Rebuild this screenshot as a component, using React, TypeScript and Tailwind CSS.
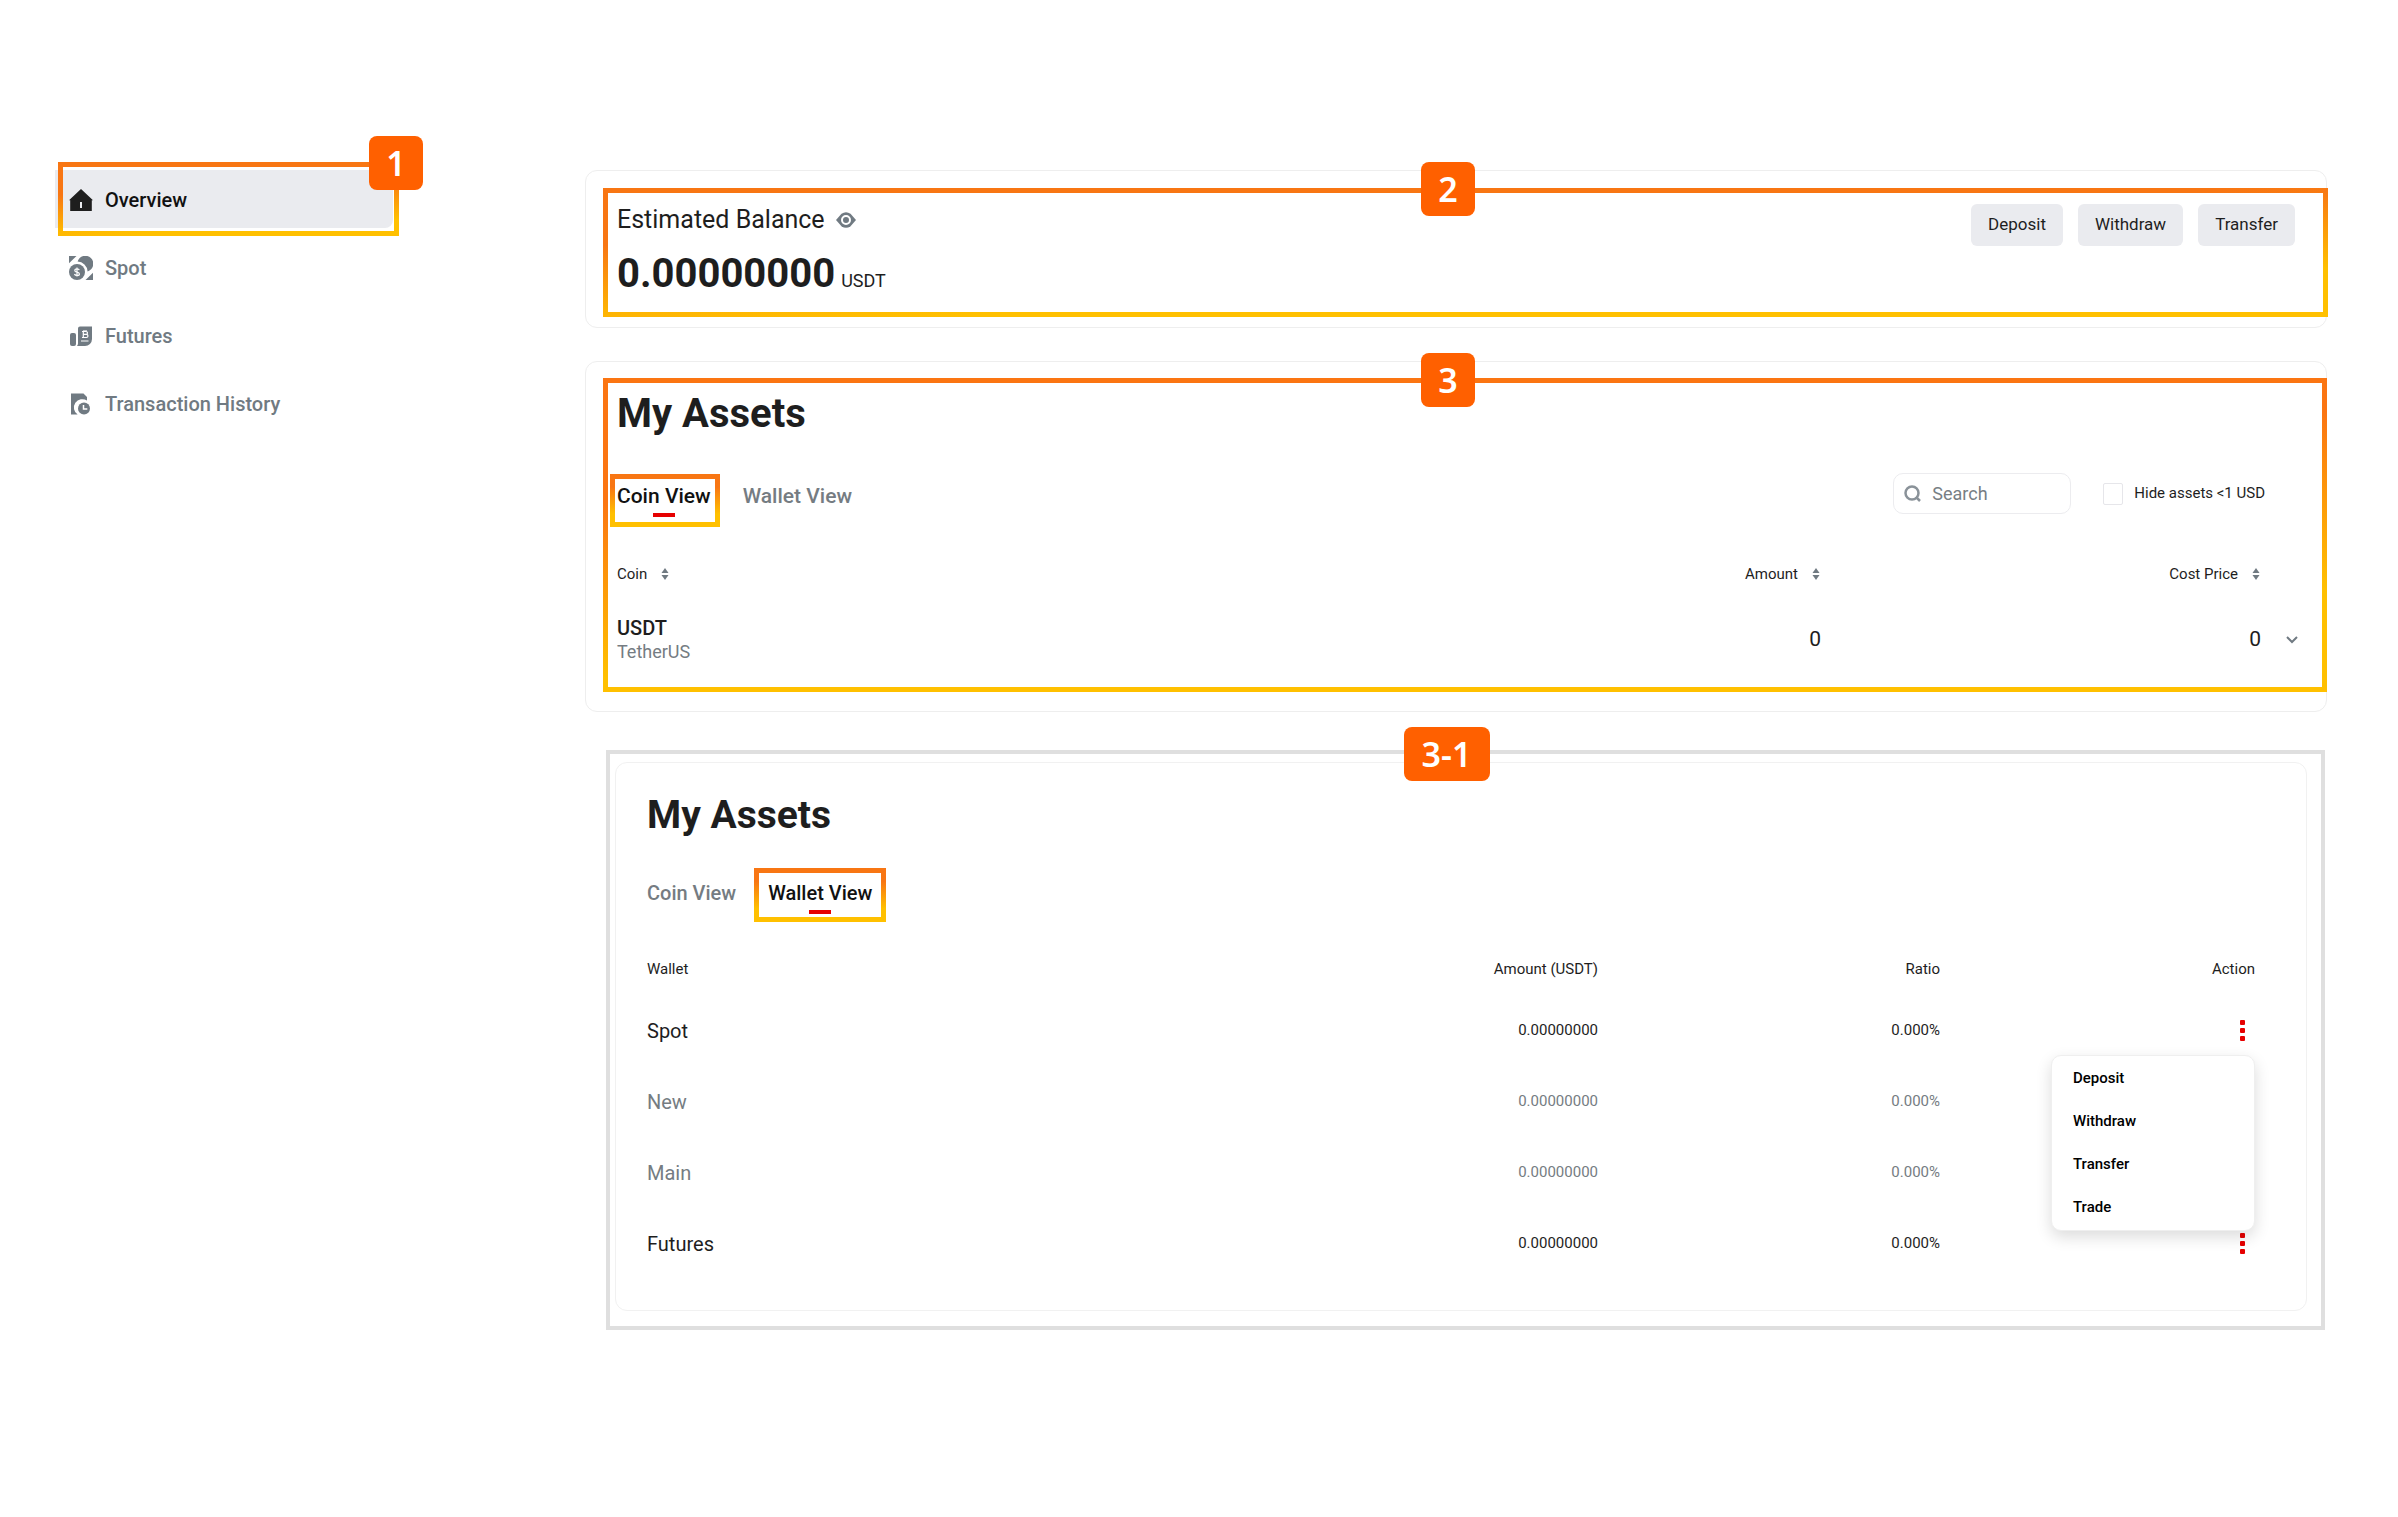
import type { ReactNode } from "react";

const navItems = [
    { label: "Overview", icon: <HomeIcon />, active: true },
    { label: "Spot", icon: <SpotIcon />, active: false },
    { label: "Futures", icon: <FuturesIcon />, active: false },
    { label: "Transaction History", icon: <HistoryIcon />, active: false },
];

const wallets = [
    { name: "Spot", amount: "0.00000000", ratio: "0.000%", muted: false, menuOpen: true },
    { name: "New", amount: "0.00000000", ratio: "0.000%", muted: true, menuOpen: false },
    { name: "Main", amount: "0.00000000", ratio: "0.000%", muted: true, menuOpen: false },
    { name: "Futures", amount: "0.00000000", ratio: "0.000%", muted: false, menuOpen: false },
];

function HomeIcon() {
    return (
        <svg width="24" height="24" viewBox="0 0 24 24" fill="#1e1e1e" aria-hidden="true">
            <path d="M12 1 24 12.2h-1.2V23H1.2V12.2H0Z" />
            <path d="M11 14h2v6h-2z" fill="#eaebef" />
        </svg>
    );
}

function SpotIcon() {
    return (
        <svg width="24" height="24" viewBox="0 0 24 24" fill="#707a82" aria-hidden="true">
            <path d="M0 0h7.5L0 7.2Z" />
            <path d="M24 24h-7.5L24 16.8Z" />
            <path d="M8.6 5.6A8 8 0 1 1 18.6 15.4 10.6 10.6 0 0 0 8.6 5.6Z" />
            <circle cx="8" cy="16" r="8" />
            <path
                d="M10.3 14.2c-.3-1-1.2-1.4-2.3-1.4-1.3 0-2.2.6-2.2 1.6 0 2.3 4.6 1.2 4.6 3.5 0 1-1 1.6-2.4 1.6-1.3 0-2.2-.5-2.5-1.5M8 11.5v9"
                fill="none"
                stroke="#fff"
                strokeWidth="1.2"
            />
        </svg>
    );
}

function FuturesIcon() {
    return (
        <svg width="24" height="24" viewBox="0 0 24 24" fill="#707a82" aria-hidden="true">
            <rect x="1" y="9" width="6" height="13" rx="2" />
            <path d="M9 4.5a2 2 0 0 1 2-2h12V15a7 7 0 0 1-7 7H8a3.6 3.6 0 0 0 1-2.5Z" />
            <path
                d="M13 7.5h4a1.4 1.4 0 0 1 0 2.9h-3M14 10.4h3.4a1.5 1.5 0 0 1 0 3.1H13M14.3 7v6.5M15 6v1.5M17 6v1.5M12 17h7.5"
                fill="none"
                stroke="#fff"
                strokeWidth="1.2"
            />
        </svg>
    );
}

function HistoryIcon() {
    return (
        <svg width="24" height="24" viewBox="0 0 24 24" fill="#707a82" aria-hidden="true">
            <path d="M2 1.5h12.5L18 5v3.6A7.6 7.6 0 0 0 8.6 22.5H2Z" />
            <circle cx="15" cy="16.5" r="6" />
            <path d="M14.5 13v4h3.8" fill="none" stroke="#fff" strokeWidth="1.5" />
        </svg>
    );
}

function EyeIcon() {
    return (
        <svg width="20" height="16" viewBox="0 0 20 16" aria-hidden="true">
            <path d="M0 8 5.5 1.8Q10-1.2 14.5 1.8L20 8l-5.5 6.2q-4.5 3-9 0Z" fill="#707a82" />
            <circle cx="10" cy="8" r="4" fill="none" stroke="#fff" strokeWidth="2" />
        </svg>
    );
}

function SortIcon() {
    return (
        <svg width="8" height="12" viewBox="0 0 8 12" fill="#707a82" aria-hidden="true">
            <path d="M4 0 7.5 5h-7Z" />
            <path d="M4 12 .5 7h7Z" />
        </svg>
    );
}

function Frame({ className }: { className: string }) {
    return (
        <div
            aria-hidden="true"
            className={`pointer-events-none absolute border-[5px] ${className}`}
        />
    );
}

function Badge({ className, children }: { className: string; children: ReactNode }) {
    return (
        <span
            className={`absolute z-10 flex h-[54px] items-center justify-center rounded-lg bg-[#ff6000] font-['Noto_Sans',sans-serif] text-[34px] leading-none font-semibold text-white ${className}`}
        >
            {children}
        </span>
    );
}

interface TabProps {
    label: string;
    active?: boolean;
    className: string;
    frame?: string;
}

function Tab({ label, active, className, frame }: TabProps) {
    return (
        <button
            type="button"
            role="tab"
            aria-selected={!!active}
            className={`relative flex flex-col items-center font-medium leading-8 ${active ? "text-[#111111]" : "text-[#757c82]"} ${className}`}
        >
            {label}
            {active && <span className="mt-px h-1 w-[22px] bg-[#e60000]" />}
            {frame && <Frame className={frame} />}
        </button>
    );
}

function SortButton({ label }: { label: string }) {
    return (
        <button type="button" className="inline-flex items-center gap-[14px] pr-px">
            {label}
            <SortIcon />
        </button>
    );
}

function Sidebar() {
    return (
        <nav className="w-[338px] shrink-0">
            <ul className="flex flex-col gap-[10px]">
                {navItems.map((item) => (
                    <li key={item.label} className="relative">
                        <a
                            href="#"
                            className={`flex h-[58px] items-center gap-3 rounded-r-lg pt-[2px] pl-[14px] text-[20px] font-medium ${item.active ? "bg-[#eaebef] text-[#111111]" : "text-[#707a82]"}`}
                        >
                            {item.icon}
                            {item.label}
                        </a>
                        {item.active && (
                            <>
                                <Frame className="-top-2 -right-[6px] -bottom-2 left-[3px] [border-image:linear-gradient(177deg,#f87613_35%,#ffc000_85%)_1]" />
                                <Badge className="-top-[34px] -right-[30px] w-[54px]">1</Badge>
                            </>
                        )}
                    </li>
                ))}
            </ul>
        </nav>
    );
}

function BalanceCard() {
    return (
        <section className="relative flex items-start justify-between rounded-xl border border-[#eeeeee] pt-[33px] pr-[31px] pb-[29px] pl-[31px]">
            <div>
                <div className="flex items-center gap-[11px] text-[25px] leading-8">
                    Estimated Balance
                    <button type="button" aria-label="Hide balance">
                        <EyeIcon />
                    </button>
                </div>
                <div className="mt-[14px] flex items-baseline gap-[6px]">
                    <span className="text-[40px] leading-[48px] font-bold">0.00000000</span>
                    <span className="text-[18px] leading-6">USDT</span>
                </div>
            </div>
            <div className="flex gap-[15px]">
                {["Deposit", "Withdraw", "Transfer"].map((label) => (
                    <button key={label} type="button" className="h-[42px] rounded-md bg-[#eaebef] px-[17px] text-[17px]">
                        {label}
                    </button>
                ))}
            </div>
            <Frame className="top-[17px] -right-[2px] bottom-[10px] left-[17px] [border-image:linear-gradient(178deg,#f87613_30%,#ffc000_75%)_1]" />
            <Badge className="-top-[9px] left-1/2 -ml-[35px] w-[54px]">2</Badge>
        </section>
    );
}

function CoinAssets() {
    return (
        <section className="relative mt-[33px] rounded-xl border border-[#eeeeee] pt-7 pr-7 pb-[31px] pl-[31px]">
            <h2 className="text-[40px] leading-[48px] font-bold">My Assets</h2>
            <div className="mt-[35px] flex items-start justify-between">
                <div role="tablist" className="flex items-start gap-8 pt-[7px]">
                    <Tab
                        label="Coin View"
                        active
                        className="text-[21px]"
                        frame="-top-[6px] -right-[9px] -bottom-[10px] -left-[7px] [border-image:linear-gradient(#f87613_20%,#ffc000_80%)_1]"
                    />
                    <Tab label="Wallet View" className="text-[21px]" />
                </div>
                <div className="mr-[33px] flex items-center gap-8">
                    <label className="flex h-[41px] w-[178px] items-center gap-[11px] rounded-[10px] border border-[#ececef] pl-[10px]">
                        <svg width="17" height="17" viewBox="0 0 17 17" fill="none" stroke="#8a9299" strokeWidth="2.5" className="shrink-0" aria-hidden="true">
                            <circle cx="8" cy="8" r="6.5" />
                            <path d="m12 12 4 4" />
                        </svg>
                        <input
                            type="text"
                            aria-label="Search"
                            placeholder="Search"
                            className="w-full min-w-0 bg-transparent text-[18px] outline-none placeholder:text-[#777e84]"
                        />
                    </label>
                    <label className="flex items-center gap-[11px] text-[15px]">
                        <input type="checkbox" className="h-[22px] w-5 appearance-none rounded-xs border border-[#e6e6ea]" />
                        Hide assets &lt;1 USD
                    </label>
                </div>
            </div>
            <table className="mt-[31px] w-full table-fixed">
                <thead>
                    <tr className="h-[52px] text-[15px]">
                        <th className="text-left font-normal"><SortButton label="Coin" /></th>
                        <th className="w-[440px] text-right font-normal"><SortButton label="Amount" /></th>
                        <th className="w-[440px] text-right font-normal"><SortButton label="Cost Price" /></th>
                        <th className="w-[37px]" />
                    </tr>
                </thead>
                <tbody>
                    <tr className="h-20">
                        <td className="leading-6">
                            <div className="text-[20px] font-medium">USDT</div>
                            <div className="text-[18px] text-[#757c82]">TetherUS</div>
                        </td>
                        <td className="text-right text-[21px]">0</td>
                        <td className="text-right text-[21px]">0</td>
                        <td>
                            <button type="button" aria-label="Show details" className="ml-auto block">
                                <svg width="12" height="8" viewBox="0 0 12 8" fill="none" stroke="#707a82" strokeWidth="2" aria-hidden="true">
                                    <path d="m1 1 5 5 5-5" />
                                </svg>
                            </button>
                        </td>
                    </tr>
                </tbody>
            </table>
            <Frame className="top-4 -right-px bottom-[19px] left-[17px] [border-image:linear-gradient(177deg,#fb7512_30%,#ffc000_75%)_1]" />
            <Badge className="-top-[9px] left-1/2 -ml-[35px] w-[54px]">3</Badge>
        </section>
    );
}

function ActionMenu() {
    return (
        <div
            role="menu"
            className="absolute top-[60px] right-0 z-10 w-[204px] rounded-[10px] border border-[#efefef] bg-white py-px shadow-[0_6px_16px_rgba(0,0,0,0.14)]"
        >
            {["Deposit", "Withdraw", "Transfer", "Trade"].map((label) => (
                <button key={label} type="button" role="menuitem" className="block h-[43px] w-full pl-[21px] text-left text-[15px] font-medium text-black">
                    {label}
                </button>
            ))}
        </div>
    );
}

function WalletAssets() {
    return (
        <section className="relative mt-[38px] mr-[2px] ml-[21px] border-4 border-[#dfdfdf] pt-2 pr-[14px] pb-[15px] pl-[5px]">
            <div className="rounded-xl border border-[#f1f1f1] pt-7 pr-[51px] pb-[31px] pl-[31px]">
                <h2 className="text-[39px] leading-[48px] font-bold">My Assets</h2>
                <div role="tablist" className="mt-[38px] flex items-start gap-8">
                    <Tab label="Coin View" className="text-[20px]" />
                    <Tab
                        label="Wallet View"
                        active
                        className="text-[20px]"
                        frame="-top-[9px] -right-[14px] -bottom-2 -left-[14px] [border-image:linear-gradient(#f87613_20%,#ffc000_80%)_1]"
                    />
                </div>
                <table className="mt-[30px] w-full table-fixed">
                    <thead>
                        <tr className="h-[51px] text-[15px]">
                            <th className="text-left font-normal">Wallet</th>
                            <th className="w-[342px] text-right font-normal">Amount (USDT)</th>
                            <th className="w-[342px] text-right font-normal">Ratio</th>
                            <th className="w-[315px] text-right font-normal">Action</th>
                        </tr>
                    </thead>
                    <tbody>
                        {wallets.map((w) => (
                            <tr key={w.name} className={`h-[71px] ${w.muted ? "text-[#757c82]" : ""}`}>
                                <td className="text-[20px]">{w.name}</td>
                                <td className="text-right text-[15px]">{w.amount}</td>
                                <td className="text-right text-[15px]">{w.ratio}</td>
                                <td>
                                    {!w.muted && (
                                        <div className="relative flex h-[71px] items-center justify-end pr-[10px]">
                                            <button type="button" aria-label={`${w.name} actions`}>
                                                <svg width="5" height="21" viewBox="0 0 5 21" fill="#e60000" aria-hidden="true">
                                                    <rect width="5" height="5" rx="1" />
                                                    <rect y="8" width="5" height="5" rx="1" />
                                                    <rect y="16" width="5" height="5" rx="1" />
                                                </svg>
                                            </button>
                                            {w.menuOpen && <ActionMenu />}
                                        </div>
                                    )}
                                </td>
                            </tr>
                        ))}
                    </tbody>
                </table>
            </div>
            <Badge className="-top-[27px] left-1/2 -ml-[62px] w-[86px]">3-1</Badge>
        </section>
    );
}

export default function App() {
    return (
        <div className="flex min-h-screen gap-48 bg-white pt-[170px] pr-[71px] pb-[187px] pl-[55px] font-[Roboto,sans-serif] text-[#1e1e1e]">
            <Sidebar />
            <main className="min-w-0 flex-1">
                <BalanceCard />
                <CoinAssets />
                <WalletAssets />
            </main>
        </div>
    );
}
